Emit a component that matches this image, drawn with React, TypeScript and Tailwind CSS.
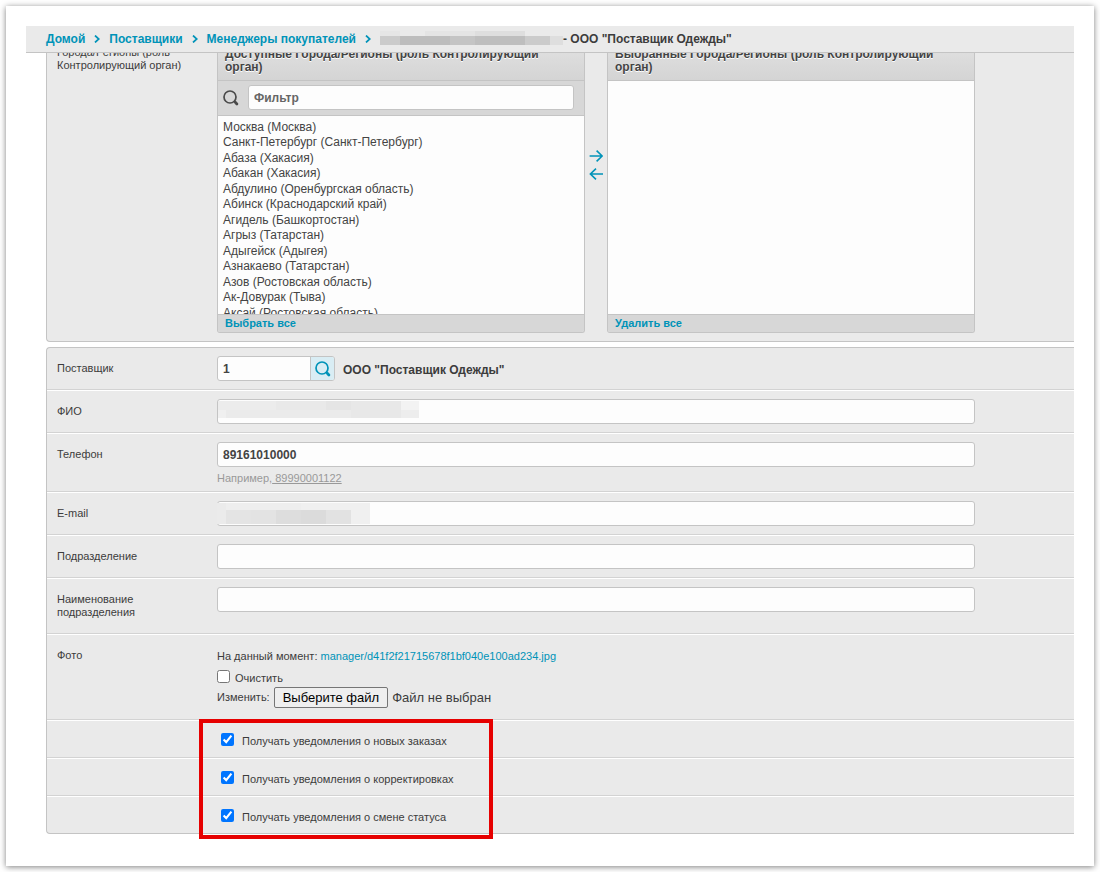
import React, { useRef, useState } from "react";

const cities = [
  "Москва (Москва)",
  "Санкт-Петербург (Санкт-Петербург)",
  "Абаза (Хакасия)",
  "Абакан (Хакасия)",
  "Абдулино (Оренбургская область)",
  "Абинск (Краснодарский край)",
  "Агидель (Башкортостан)",
  "Агрыз (Татарстан)",
  "Адыгейск (Адыгея)",
  "Азнакаево (Татарстан)",
  "Азов (Ростовская область)",
  "Ак-Довурак (Тыва)",
  "Аксай (Ростовская область)",
];

const notifications = [
  { id: "notify-orders", label: "Получать уведомления о новых заказах" },
  { id: "notify-corrections", label: "Получать уведомления о корректировках" },
  { id: "notify-status", label: "Получать уведомления о смене статуса" },
];

const inputClass =
  "block h-[25px] w-full rounded-[3px] border border-[#c4c4c4] bg-[#fdfdfd] px-[5px] text-xs font-bold text-[#444] outline-none";

const SearchIcon = ({ className }: { className: string }) => (
  <svg className={className} viewBox="0 0 16 16" fill="none" stroke="currentColor">
    <circle cx="7" cy="7" r="6" strokeWidth="1.7" />
    <path d="M11.3 11.3l1.4 1.4" strokeWidth="1.6" />
    <path d="M12.3 12.3l1.6 1.6" strokeWidth="2.8" strokeLinecap="round" />
  </svg>
);

const Chevron = () => (
  <svg className="h-2 w-[6px] text-[#0093b8]" viewBox="0 0 6 8" fill="none" stroke="currentColor" strokeWidth="1.7">
    <path d="M1 0.5L4.8 4L1 7.5" />
  </svg>
);

const Arrow = ({ back }: { back?: boolean }) => (
  <svg className="h-3 w-[14px]" viewBox="0 0 14 12" fill="none" stroke="currentColor" strokeWidth="1.6">
    {back ? <path d="M14 6H1.4M7 0.7L1.4 6L7 11.3" /> : <path d="M0.6 6H13.2M7.6 0.7L13.2 6L7.6 11.3" />}
  </svg>
);

interface BlocksProps {
  className: string;
  width: number;
  height: number;
  // x, y, width, height, fill
  blocks: [number, number, number, number, string][];
}

const Blocks = ({ className, width, height, blocks }: BlocksProps) => (
  <svg className={className} viewBox={`0 0 ${width} ${height}`} shapeRendering="crispEdges" aria-hidden="true">
    {blocks.map(([x, y, w, h, fill]) => (
      <rect key={`${x}-${y}`} x={x} y={y} width={w} height={h} fill={fill} />
    ))}
  </svg>
);

interface RowProps {
  label: string;
  htmlFor?: string;
  first?: boolean;
  children: React.ReactNode;
}

const Row = ({ label, htmlFor, first, children }: RowProps) => (
  <div className={`flex border-b border-b-[#d3d3d3] py-2 pl-[10px] ${first ? "" : "border-t border-t-white"}`}>
    <label htmlFor={htmlFor} className="w-40 shrink-0 py-[6px] pr-6 leading-[13px]">
      {label}
    </label>
    <div className="min-w-0 max-w-[758px] flex-1">{children}</div>
  </div>
);

const SelectorHeader = ({ children }: { children: React.ReactNode }) => (
  <h2 className="border-b border-[#c4c4c4] bg-linear-to-b from-[#e2e2e2] to-[#d4d4d4] pt-[7px] pr-4 pb-[6px] pl-[7px] text-xs/[13px] font-bold text-[#444] [text-shadow:0_1px_0_#fff]">
    {children}
  </h2>
);

const SelectorFooter = ({ children }: { children: React.ReactNode }) => (
  <div className="border-t border-[#c4c4c4] bg-[#d7d7d7] px-[7px] pb-px">
    <a href="#" className="block w-fit font-bold leading-4 text-[#0093b8]">
      {children}
    </a>
  </div>
);

const App: React.FC = () => {
  const [checked, setChecked] = useState<Record<string, boolean>>({
    "notify-orders": true,
    "notify-corrections": true,
    "notify-status": true,
  });
  const fileRef = useRef<HTMLInputElement>(null);
  const [fileName, setFileName] = useState("");

  return (
    <div className="p-[6px] font-['Liberation_Sans',Arial,sans-serif] text-[11px] text-[#3c3c3c]">
      <div className="bg-white px-5 pt-5 pb-8 shadow-[0_1px_6px_rgba(0,0,0,0.5)]">
        <nav className="relative z-10 flex h-[27px] items-center gap-[9px] border-b border-[#c4c4c4] bg-[#eaeaea] pl-5 text-xs font-bold whitespace-nowrap">
          <a href="#" className="text-[#0093b8]">Домой</a>
          <Chevron />
          <a href="#" className="text-[#0093b8]">Поставщики</a>
          <Chevron />
          <a href="#" className="text-[#0093b8]">Менеджеры покупателей</a>
          <Chevron />
          <span className="flex items-center">
            <Blocks
              className="mb-[2px] h-[14px] w-[183px]"
              width={183}
              height={14}
              blocks={[
                [0, 0, 20, 5, "#e6e6e6"],
                [45, 0, 50, 5, "#e4e4e4"],
                [95, 0, 50, 5, "#dedede"],
                [0, 5, 20, 9, "#cbcbcb"],
                [20, 5, 50, 9, "#bdbdbd"],
                [70, 5, 25, 9, "#c4c4c4"],
                [95, 5, 50, 9, "#bebebe"],
                [145, 5, 25, 9, "#cbcbcb"],
                [170, 5, 13, 9, "#dedede"],
              ]}
            />
            - ООО "Поставщик Одежды"
          </span>
        </nav>

        <main className="ml-5">
          <section className="-mt-3 flex rounded-bl border-b border-l border-[#c4c4c4] bg-[#eaeaea] pb-2 pl-[10px]">
            <label htmlFor="cities" className="w-40 shrink-0 pt-[5px] pr-6 leading-[13px]">
              Города/Регионы (роль Контролирующий орган)
            </label>
            <div className="flex max-w-[758px] flex-1">
              <div className="flex min-w-0 flex-1 flex-col overflow-hidden rounded-b-[3px] border-x border-b border-[#c4c4c4]">
                <SelectorHeader>Доступные Города/Регионы (роль Контролирующий орган)</SelectorHeader>
                <div className="flex items-center gap-[9px] border-b border-[#c4c4c4] bg-[#d7d7d7] pt-1 pr-[10px] pb-[5px] pl-[5px]">
                  <SearchIcon className="size-4 shrink-0 text-[#4a4a4a]" />
                  <input
                    type="text"
                    aria-label="Фильтр"
                    placeholder="Фильтр"
                    className={`${inputClass} placeholder:text-[#666]`}
                  />
                </div>
                <select
                  id="cities"
                  multiple
                  className="block h-[198px] w-full overflow-hidden bg-[#fdfdfd] pt-1 text-xs text-[#444] outline-none"
                >
                  {cities.map((city) => (
                    <option key={city} className="h-[15px] px-[5px] py-0 leading-[15px] even:h-4">
                      {city}
                    </option>
                  ))}
                </select>
                <SelectorFooter>Выбрать все</SelectorFooter>
              </div>

              <div className="flex w-[22px] shrink-0 flex-col items-center gap-[6px] pt-[109px] text-[#0093b8]">
                <button type="button" aria-label="Добавить">
                  <Arrow />
                </button>
                <button type="button" aria-label="Убрать">
                  <Arrow back />
                </button>
              </div>

              <div className="flex min-w-0 flex-1 flex-col overflow-hidden rounded-b-[3px] border-x border-b border-[#c4c4c4]">
                <SelectorHeader>Выбранные Города/Регионы (роль Контролирующий орган)</SelectorHeader>
                <select
                  multiple
                  aria-label="Выбранные Города/Регионы"
                  className="block min-h-0 w-full flex-1 bg-[#fdfdfd] outline-none"
                />
                <SelectorFooter>Удалить все</SelectorFooter>
              </div>
            </div>
          </section>

          <section className="mt-[5px] rounded-l border-y border-l border-[#c4c4c4] bg-[#eaeaea]">
            <Row label="Поставщик" htmlFor="supplier" first>
              <div className="flex items-center gap-2">
                <div className="flex h-[25px] w-[118px] overflow-hidden rounded-[3px] border border-[#c4c4c4] bg-[#fdfdfd]">
                  <input
                    id="supplier"
                    type="text"
                    defaultValue="1"
                    className="min-w-0 flex-1 px-[5px] text-xs font-bold text-[#444] outline-none"
                  />
                  <button
                    type="button"
                    aria-label="Найти"
                    className="flex w-6 shrink-0 items-center justify-center border-l border-[#c4c4c4] bg-[#d9edf4] text-[#0093b8]"
                  >
                    <SearchIcon className="size-4" />
                  </button>
                </div>
                <strong className="pt-[2px] text-xs">ООО "Поставщик Одежды"</strong>
              </div>
            </Row>

            <Row label="ФИО" htmlFor="fio">
              <div className="relative">
                <input id="fio" type="text" className={inputClass} />
                <Blocks
                  className="pointer-events-none absolute top-[2px] left-px h-[17px] w-[201px]"
                  width={201}
                  height={17}
                  blocks={[
                    [0, 0, 58, 9, "#ececec"],
                    [58, 0, 50, 9, "#e9e9e9"],
                    [108, 0, 25, 9, "#e5e5e5"],
                    [133, 0, 50, 9, "#e8e8e8"],
                    [183, 0, 18, 9, "#f3f3f3"],
                    [0, 9, 8, 8, "#f0f0f0"],
                    [8, 9, 125, 8, "#ebebeb"],
                    [133, 9, 50, 8, "#e8e8e8"],
                    [183, 9, 18, 8, "#ededed"],
                  ]}
                />
              </div>
            </Row>

            <Row label="Телефон" htmlFor="phone">
              <input id="phone" type="tel" defaultValue="89161010000" className={inputClass} />
              <p className="mt-[5px] -mb-[2px] leading-[13px] text-[#999]">
                Например,<span className="underline"> 89990001122</span>
              </p>
            </Row>

            <Row label="E-mail" htmlFor="email">
              <div className="relative">
                <input id="email" type="email" className={inputClass} />
                <Blocks
                  className="pointer-events-none absolute top-[2px] left-0 h-[21px] w-[153px]"
                  width={153}
                  height={21}
                  blocks={[
                    [0, 0, 9, 21, "#ebebeb"],
                    [9, 0, 75, 7, "#eeeeee"],
                    [84, 0, 69, 7, "#f0f0f0"],
                    [9, 7, 25, 14, "#e4e4e4"],
                    [34, 7, 25, 14, "#e3e3e3"],
                    [59, 7, 25, 14, "#dddddd"],
                    [84, 7, 25, 14, "#dbdbdb"],
                    [109, 7, 25, 14, "#e2e2e2"],
                    [134, 7, 19, 14, "#f0f0f0"],
                  ]}
                />
              </div>
            </Row>

            <Row label="Подразделение" htmlFor="department">
              <input id="department" type="text" className={inputClass} />
            </Row>

            <Row label="Наименование подразделения" htmlFor="department-name">
              <input id="department-name" type="text" className={inputClass} />
            </Row>

            <Row label="Фото" htmlFor="photo">
              <p className="pt-[7px] leading-[13px]">
                На данный момент:{" "}
                <a href="#" className="text-[#0093b8]">
                  manager/d41f2f21715678f1bf040e100ad234.jpg
                </a>
              </p>
              <div className="mt-[7px] flex">
                <input id="photo-clear" type="checkbox" className="size-[13px]" />
                <label htmlFor="photo-clear" className="pt-[2px] pl-[5px] leading-[13px]">
                  Очистить
                </label>
              </div>
              <div className="mt-[2px] mb-[3px] flex items-center gap-1">
                <label htmlFor="photo">Изменить:</label>
                <input
                  ref={fileRef}
                  id="photo"
                  type="file"
                  className="hidden"
                  onChange={(e) => setFileName(e.target.files?.[0]?.name ?? "")}
                />
                <button
                  type="button"
                  className="h-[21px] rounded-[2px] border border-[#767676] bg-[#efefef] px-2 text-[13px] leading-[19px] text-black"
                  onClick={() => fileRef.current?.click()}
                >
                  Выберите файл
                </button>
                <span className="text-[13px]">{fileName || "Файл не выбран"}</span>
              </div>
            </Row>

            <div className="relative">
              {notifications.map(({ id, label }) => (
                <div
                  key={id}
                  className="flex h-[38px] border-t border-b border-t-white border-b-[#d3d3d3] pt-3 pl-[174px] last-of-type:h-[37px] last-of-type:border-b-0"
                >
                  <input
                    id={id}
                    type="checkbox"
                    className="size-[13px]"
                    checked={checked[id]}
                    onChange={(e) => setChecked({ ...checked, [id]: e.target.checked })}
                  />
                  <label htmlFor={id} className="pt-[2px] pl-2 leading-[13px]">
                    {label}
                  </label>
                </div>
              ))}
              <span className="pointer-events-none absolute -top-px -bottom-[6px] left-[152px] w-[294px] border-4 border-[#e60000]" />
            </div>
          </section>
        </main>
      </div>
    </div>
  );
};

export default App;
